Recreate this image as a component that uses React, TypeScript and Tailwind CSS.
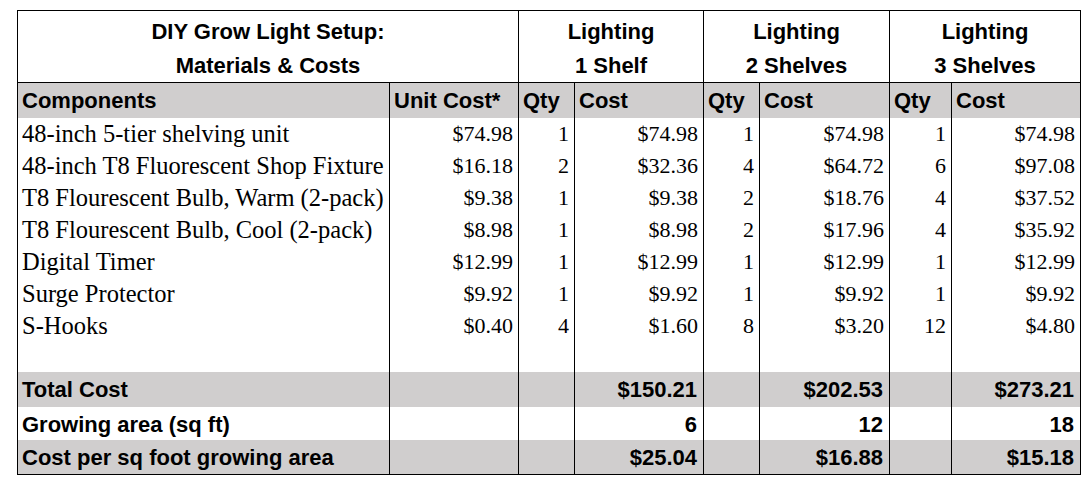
import React from "react";

const rows: string[][] = [
  ["48-inch 5-tier shelving unit", "$74.98", "1", "$74.98", "1", "$74.98", "1", "$74.98"],
  ["48-inch T8 Fluorescent Shop Fixture", "$16.18", "2", "$32.36", "4", "$64.72", "6", "$97.08"],
  ["T8 Flourescent Bulb, Warm (2-pack)", "$9.38", "1", "$9.38", "2", "$18.76", "4", "$37.52"],
  ["T8 Flourescent Bulb, Cool (2-pack)", "$8.98", "1", "$8.98", "2", "$17.96", "4", "$35.92"],
  ["Digital Timer", "$12.99", "1", "$12.99", "1", "$12.99", "1", "$12.99"],
  ["Surge Protector", "$9.92", "1", "$9.92", "1", "$9.92", "1", "$9.92"],
  ["S-Hooks", "$0.40", "4", "$1.60", "8", "$3.20", "12", "$4.80"],
];

const totals: { label: string; vals: string[]; gray: boolean; h: string }[] = [
  { label: "Total Cost", vals: ["$150.21", "$202.53", "$273.21"], gray: true, h: "h-[35px]" },
  { label: "Growing area (sq ft)", vals: ["6", "12", "18"], gray: false, h: "h-[33px]" },
  { label: "Cost per sq foot growing area", vals: ["$25.04", "$16.88", "$15.18"], gray: true, h: "h-[34px]" },
];

const sans = "font-['Liberation_Sans',Arial,sans-serif] font-bold text-[22px]";
const serif = "font-['Liberation_Serif','Times_New_Roman',serif]";

export default function App() {
  return (
    <div className="bg-white w-[1091px] h-[487px] pt-[10px] pl-[17px] text-black">
      <div className="w-[1064px] border-l border-t border-b border-black grid grid-cols-[372px_129px_56px_129px_56px_130px_62px_129px]">
        {/* Header row 1 */}
        <div className={`col-span-2 h-[72px] border-r border-b border-black text-center pt-[3px] leading-[35px] ${sans}`}>
          <div className="h-[34px]">DIY Grow Light Setup:</div>
          <div className="h-[34px]">Materials &amp; Costs</div>
        </div>
        {["1 Shelf", "2 Shelves", "3 Shelves"].map((s) => (
          <div key={s} className={`col-span-2 h-[72px] border-r border-b border-black text-center pt-[3px] leading-[35px] ${sans}`}>
            <div className="h-[34px]">Lighting</div>
            <div className="h-[34px]">{s}</div>
          </div>
        ))}

        {/* Header row 2 */}
        {["Components", "Unit Cost*", "Qty", "Cost", "Qty", "Cost", "Qty", "Cost"].map((t, i) => (
          <div key={i} className={`h-[35px] bg-[#d0cece] border-r border-black pl-[4px] leading-[35px] whitespace-nowrap ${sans}`}>
            {t}
          </div>
        ))}

        {/* Data rows */}
        {rows.map((r, ri) =>
          r.map((v, ci) => (
            <div
              key={`${ri}-${ci}`}
              className={`h-[32px] border-r border-black leading-[32px] whitespace-nowrap ${serif} ${
                ci === 0 ? "pl-[4px] text-[24.5px]" : "text-right pr-[5px] text-[22px]"
              }`}
            >
              {v}
            </div>
          ))
        )}

        {/* Empty row */}
        {Array.from({ length: 8 }).map((_, i) => (
          <div key={`e${i}`} className="h-[30px] border-r border-black" />
        ))}

        {/* Totals */}
        {totals.map((t) => (
          <React.Fragment key={t.label}>
            <div className={`${t.h} ${t.gray ? "bg-[#d0cece]" : ""} border-r border-black pl-[4px] pt-[3px] leading-[30px] whitespace-nowrap ${sans}`}>
              {t.label}
            </div>
            <div className={`${t.h} ${t.gray ? "bg-[#d0cece]" : ""} border-r border-black`} />
            {t.vals.map((v, i) => (
              <React.Fragment key={i}>
                <div className={`${t.h} ${t.gray ? "bg-[#d0cece]" : ""} border-r border-black`} />
                <div className={`${t.h} ${t.gray ? "bg-[#d0cece]" : ""} border-r border-black text-right pr-[6px] pt-[3px] leading-[30px] ${sans}`}>
                  {v}
                </div>
              </React.Fragment>
            ))}
          </React.Fragment>
        ))}
      </div>
    </div>
  );
}
